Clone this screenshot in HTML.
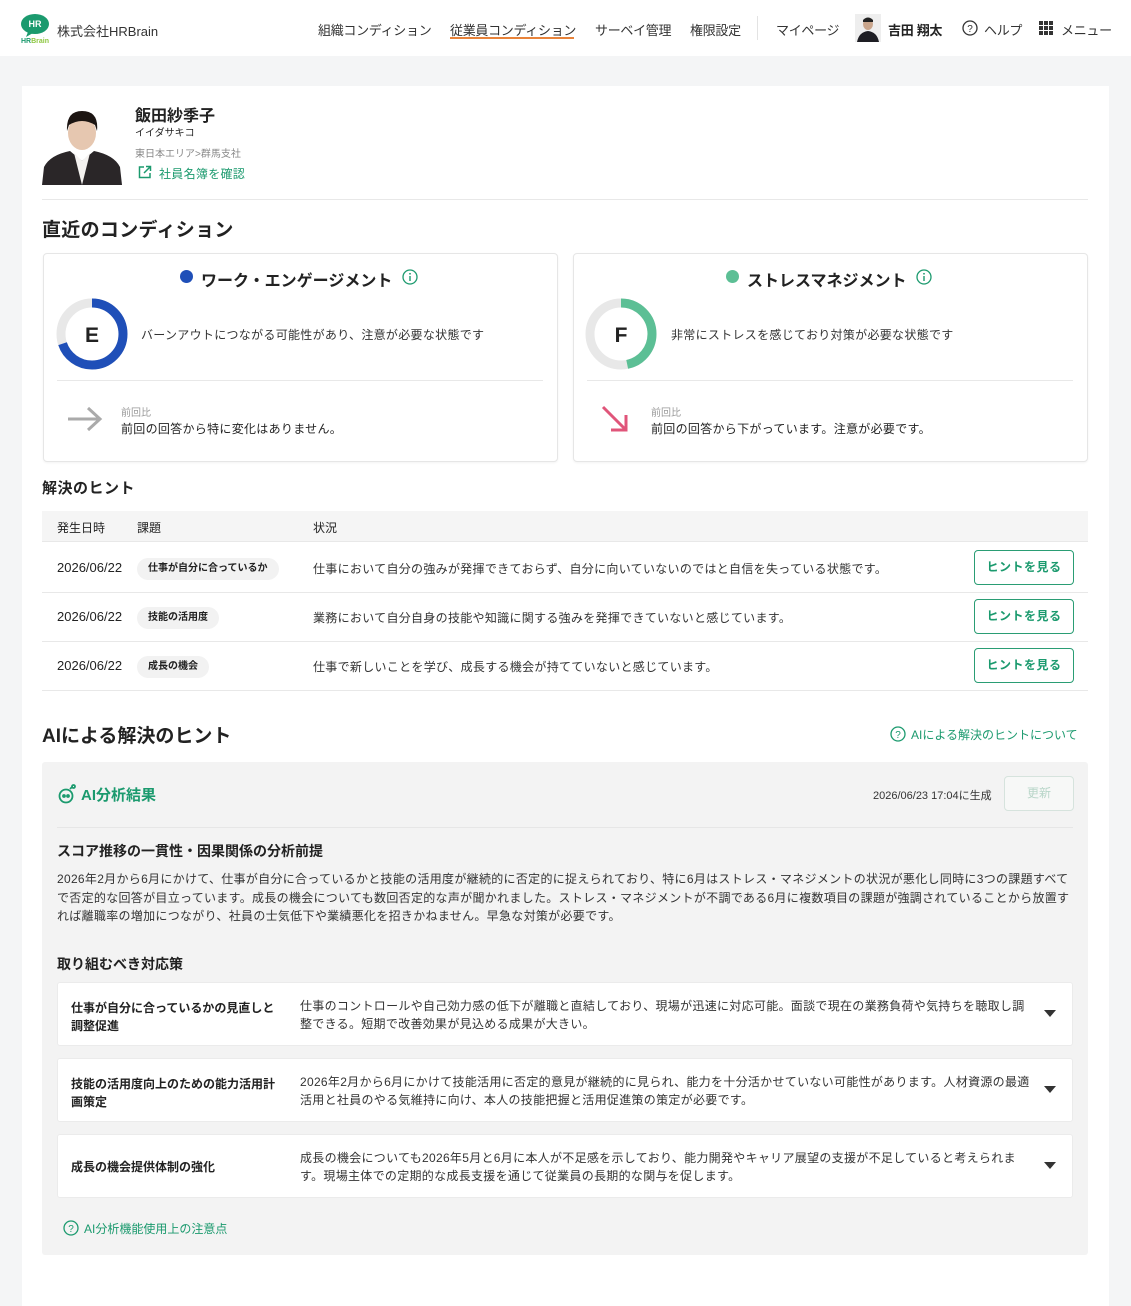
<!DOCTYPE html>
<html><head><meta charset="utf-8"><style>
*{margin:0;padding:0;box-sizing:border-box}
body{width:1131px;height:1280px;background:#f4f5f6;font-family:"Liberation Sans","Noto Sans CJK JP",sans-serif;color:#222;position:relative;overflow:hidden}
.a{position:absolute;white-space:nowrap}
.ls{letter-spacing:0.3px}
.g{color:#1b9a6e}
.hdr{position:absolute;left:0;top:0;width:1131px;height:56px;background:#fff}
.nav{font-size:13px;top:20px;color:#333}
.card{position:absolute;left:22px;top:86px;width:1087px;height:1220px;background:#fff}
.box{position:absolute;background:#fff;border:1px solid #e6e6e6;border-radius:4px;box-shadow:0 1px 2px rgba(0,0,0,.05)}
.hr{position:absolute;height:1px;background:#e8e8e8}
.tag{position:absolute;height:22px;line-height:22px;padding:0 11px;border-radius:11px;background:#f2f2f2;font-size:10px;font-weight:bold;color:#222}
.btn{position:absolute;left:974px;width:100px;height:35px;border:1.5px solid #2a9d74;border-radius:4px;color:#1b9a6e;font-weight:bold;font-size:12px;text-align:center;line-height:32px;background:#fff;letter-spacing:0.5px}
.acc{position:absolute;left:57px;width:1016px;height:64px;background:#fff;border:1px solid #ebebeb;border-radius:3px}
.acc .t{position:absolute;left:13px;font-size:12px;font-weight:bold;line-height:18px;width:212px}
.acc .d{position:absolute;left:242px;font-size:12px;line-height:18px;width:735px;color:#333;letter-spacing:0.3px}
.acc .c{position:absolute;left:986px;top:27px;width:0;height:0;border-left:6px solid transparent;border-right:6px solid transparent;border-top:7px solid #333}
.dt{font-size:13px}
</style></head><body>
<div class="hdr"></div>
<svg class="a" style="left:20px;top:13px" width="30" height="32" viewBox="0 0 30 32"><ellipse cx="15" cy="11" rx="14" ry="10" fill="#1b9a6e"/><path d="M8 19 L6 24 L13 20Z" fill="#1b9a6e"/><text x="15" y="14" font-size="9" font-weight="bold" fill="#fff" text-anchor="middle" font-family="Liberation Sans">HR</text><text x="1" y="30" font-size="7" font-weight="bold" fill="#1b9a6e" font-family="Liberation Sans">HR<tspan fill="#8cc63f">Brain</tspan></text></svg>
<div class="a" style="left:57px;top:21px;font-size:13px;color:#333">株式会社HRBrain</div>
<div class="a nav" style="left:318px;letter-spacing:-0.3px">組織コンディション</div>
<div class="a nav" style="left:450px;letter-spacing:-0.3px">従業員コンディション</div>
<div class="a" style="left:450px;top:37px;width:124px;height:1.5px;background:#e8833a"></div>
<div class="a nav" style="left:595px;letter-spacing:-0.3px">サーベイ管理</div>
<div class="a nav" style="left:690px;letter-spacing:-0.3px">権限設定</div>
<div class="a" style="left:757px;top:16px;width:1px;height:24px;background:#e3e3e3"></div>
<div class="a nav" style="left:776px;letter-spacing:-0.3px">マイページ</div>
<svg class="a" style="left:855px;top:14px" width="26" height="28"><rect width="26" height="28" fill="#eee"/><ellipse cx="13" cy="10" rx="5" ry="6" fill="#c9a58c"/><path d="M8 6 Q13 1 18 6 L18 8 L8 8Z" fill="#222"/><path d="M2 28 Q4 18 13 17 Q22 18 24 28Z" fill="#1e1e24"/></svg>
<div class="a nav" style="left:888px;font-weight:bold;color:#222;letter-spacing:-0.3px">吉田 翔太</div>
<svg class="a" style="left:962px;top:20px" width="16" height="16"><circle cx="8" cy="8" r="7" fill="none" stroke="#333" stroke-width="1.3"/><text x="8" y="12" font-size="10" text-anchor="middle" fill="#333" font-family="Liberation Sans">?</text></svg>
<div class="a nav" style="left:984px;letter-spacing:-0.3px">ヘルプ</div>
<svg class="a" style="left:1039px;top:21px" width="14" height="14" fill="#333"><rect x="0" y="0" width="4" height="4"/><rect x="5" y="0" width="4" height="4"/><rect x="10" y="0" width="4" height="4"/><rect x="0" y="5" width="4" height="4"/><rect x="5" y="5" width="4" height="4"/><rect x="10" y="5" width="4" height="4"/><rect x="0" y="10" width="4" height="4"/><rect x="5" y="10" width="4" height="4"/><rect x="10" y="10" width="4" height="4"/></svg>
<div class="a nav" style="left:1061px;letter-spacing:-0.3px">メニュー</div>

<div class="card"></div>
<svg class="a" style="left:42px;top:103px" width="80" height="82"><rect width="80" height="82" rx="4" fill="#fff"/><ellipse cx="40" cy="30" rx="14" ry="17" fill="#e6c7b0"/><path d="M25 28 Q24 8 40 8 Q57 8 55 28 L53 22 Q40 14 27 22Z" fill="#1c1512"/><path d="M0 82 L2 64 Q8 52 28 48 L40 58 L52 48 Q72 52 78 64 L80 82Z" fill="#2a2628"/><path d="M32 50 L40 82 L48 50 L40 58Z" fill="#f4f2f0"/></svg>
<div class="a" style="left:135px;top:102px;font-size:16px;font-weight:bold">飯田紗季子</div>
<div class="a" style="left:135px;top:124px;font-size:10px">イイダサキコ</div>
<div class="a" style="left:135px;top:145px;font-size:10px;color:#888">東日本エリア&gt;群馬支社</div>
<svg class="a" style="left:138px;top:165px" width="14" height="14" fill="none" stroke="#1b9a6e" stroke-width="1.5"><path d="M6 2H1.5V12.5H12V8"/><path d="M8 1.5H12.5V6M12.5 1.5L6 8"/></svg>
<div class="a g ls" style="left:159px;top:165px;font-size:12px">社員名簿を確認</div>
<div class="hr" style="left:42px;top:199px;width:1046px"></div>
<div class="a" style="left:42px;top:215px;font-size:19px;font-weight:bold;letter-spacing:0.3px">直近のコンディション</div>

<div class="box" style="left:43px;top:253px;width:515px;height:209px"></div>
<div class="a" style="left:180px;top:270px;width:13px;height:13px;border-radius:50%;background:#1f4fb8"></div>
<div class="a" style="left:201px;top:267px;font-size:16px;font-weight:bold">ワーク・エンゲージメント</div>
<svg class="a" style="left:402px;top:269px" width="16" height="16"><circle cx="8" cy="8" r="7" fill="none" stroke="#1b9a6e" stroke-width="1.3"/><rect x="7.3" y="7" width="1.4" height="5" fill="#1b9a6e"/><circle cx="8" cy="4.8" r="0.9" fill="#1b9a6e"/></svg>
<svg class="a" style="left:56px;top:298px" width="72" height="72"><circle cx="36" cy="36" r="31" fill="none" stroke="#e8e8e8" stroke-width="9"/><circle cx="36" cy="36" r="31" fill="none" stroke="#1f4fb8" stroke-width="9" stroke-dasharray="136 200" transform="rotate(-90 36 36)"/><text x="36" y="44" font-size="21" font-weight="bold" text-anchor="middle" fill="#222" font-family="Liberation Sans">E</text></svg>
<div class="a ls" style="left:141px;top:326px;font-size:12px;color:#333">バーンアウトにつながる可能性があり、注意が必要な状態です</div>
<div class="hr" style="left:57px;top:380px;width:486px"></div>
<svg class="a" style="left:66px;top:405px" width="38" height="28" fill="none" stroke="#aaa" stroke-width="3"><path d="M2 14H34M22 3L34 14L22 25"/></svg>
<div class="a" style="left:121px;top:404px;font-size:10px;color:#999">前回比</div>
<div class="a ls" style="left:121px;top:420px;font-size:12px">前回の回答から特に変化はありません。</div>

<div class="box" style="left:573px;top:253px;width:515px;height:209px"></div>
<div class="a" style="left:726px;top:270px;width:13px;height:13px;border-radius:50%;background:#5cbf95"></div>
<div class="a" style="left:747px;top:267px;font-size:16px;font-weight:bold">ストレスマネジメント</div>
<svg class="a" style="left:916px;top:269px" width="16" height="16"><circle cx="8" cy="8" r="7" fill="none" stroke="#1b9a6e" stroke-width="1.3"/><rect x="7.3" y="7" width="1.4" height="5" fill="#1b9a6e"/><circle cx="8" cy="4.8" r="0.9" fill="#1b9a6e"/></svg>
<svg class="a" style="left:585px;top:298px" width="72" height="72"><circle cx="36" cy="36" r="31" fill="none" stroke="#e8e8e8" stroke-width="9"/><circle cx="36" cy="36" r="31" fill="none" stroke="#5cbf95" stroke-width="9" stroke-dasharray="91 200" transform="rotate(-90 36 36)"/><text x="36" y="44" font-size="21" font-weight="bold" text-anchor="middle" fill="#222" font-family="Liberation Sans">F</text></svg>
<div class="a ls" style="left:671px;top:326px;font-size:12px;color:#333">非常にストレスを感じており対策が必要な状態です</div>
<div class="hr" style="left:587px;top:380px;width:486px"></div>
<svg class="a" style="left:600px;top:404px" width="30" height="30" fill="none" stroke="#e0557a" stroke-width="3"><path d="M3 3L26 26M26 11V26H11"/></svg>
<div class="a" style="left:651px;top:404px;font-size:10px;color:#999">前回比</div>
<div class="a ls" style="left:651px;top:420px;font-size:12px">前回の回答から下がっています。注意が必要です。</div>

<div class="a" style="left:42px;top:477px;font-size:15px;font-weight:bold;letter-spacing:0.5px">解決のヒント</div>
<div class="a" style="left:42px;top:511px;width:1046px;height:31px;background:#f5f5f5;border-bottom:1px solid #e8e8e8"></div>
<div class="a" style="left:57px;top:519px;font-size:12px">発生日時</div>
<div class="a" style="left:137px;top:519px;font-size:12px">課題</div>
<div class="a" style="left:313px;top:519px;font-size:12px">状況</div>
<div class="hr" style="left:42px;top:592px;width:1046px"></div>
<div class="hr" style="left:42px;top:641px;width:1046px"></div>
<div class="hr" style="left:42px;top:690px;width:1046px"></div>

<div class="a dt" style="left:57px;top:560px">2026/06/22</div>
<div class="tag" style="left:137px;top:558px">仕事が自分に合っているか</div>
<div class="a ls" style="left:313px;top:560px;font-size:12px;color:#333">仕事において自分の強みが発揮できておらず、自分に向いていないのではと自信を失っている状態です。</div>
<div class="btn" style="top:550px">ヒントを見る</div>
<div class="a dt" style="left:57px;top:609px">2026/06/22</div>
<div class="tag" style="left:137px;top:607px">技能の活用度</div>
<div class="a ls" style="left:313px;top:609px;font-size:12px;color:#333">業務において自分自身の技能や知識に関する強みを発揮できていないと感じています。</div>
<div class="btn" style="top:599px">ヒントを見る</div>
<div class="a dt" style="left:57px;top:658px">2026/06/22</div>
<div class="tag" style="left:137px;top:656px">成長の機会</div>
<div class="a ls" style="left:313px;top:658px;font-size:12px;color:#333">仕事で新しいことを学び、成長する機会が持てていないと感じています。</div>
<div class="btn" style="top:648px">ヒントを見る</div>

<div class="a" style="left:42px;top:721px;font-size:19px;font-weight:bold">AIによる解決のヒント</div>
<svg class="a" style="left:890px;top:726px" width="16" height="16"><circle cx="8" cy="8" r="7" fill="none" stroke="#1b9a6e" stroke-width="1.3"/><text x="8" y="12" font-size="10" text-anchor="middle" fill="#1b9a6e" font-family="Liberation Sans">?</text></svg>
<div class="a g" style="left:911px;top:726px;font-size:12px">AIによる解決のヒントについて</div>

<div class="a" style="left:42px;top:762px;width:1046px;height:493px;background:#f3f3f3;border-radius:3px"></div>
<svg class="a" style="left:57px;top:784px" width="20" height="20" fill="none" stroke="#1b9a6e" stroke-width="1.8"><circle cx="9" cy="12" r="6.5"/><circle cx="7" cy="12" r="1" fill="#1b9a6e"/><circle cx="11" cy="12" r="1" fill="#1b9a6e"/><path d="M13 5L15 3"/><circle cx="16.5" cy="2.5" r="1.5"/></svg>
<div class="a g" style="left:81px;top:784px;font-size:15px;font-weight:bold">AI分析結果</div>
<div class="a" style="left:873px;top:787px;font-size:11px;color:#333">2026/06/23 17:04に生成</div>
<div class="a" style="left:1004px;top:776px;width:70px;height:35px;border:1px solid #d6e3dd;border-radius:4px;background:#f7f8f7;color:#b9d6c9;font-size:12px;text-align:center;line-height:33px">更新</div>
<div class="hr" style="left:57px;top:827px;width:1016px;background:#e6e6e6"></div>
<div class="a" style="left:57px;top:841px;font-size:14px;font-weight:bold">スコア推移の一貫性・因果関係の分析前提</div>
<div class="a" style="left:57px;top:870px;width:1020px;font-size:12px;line-height:18.7px;white-space:normal;color:#333;letter-spacing:0.3px">2026年2月から6月にかけて、仕事が自分に合っているかと技能の活用度が継続的に否定的に捉えられており、特に6月はストレス・マネジメントの状況が悪化し同時に3つの課題すべてで否定的な回答が目立っています。成長の機会についても数回否定的な声が聞かれました。ストレス・マネジメントが不調である6月に複数項目の課題が強調されていることから放置すれば離職率の増加につながり、社員の士気低下や業績悪化を招きかねません。早急な対策が必要です。</div>
<div class="a" style="left:57px;top:954px;font-size:14px;font-weight:bold">取り組むべき対応策</div>

<div class="acc" style="top:982px"><div class="t" style="top:16px;white-space:normal">仕事が自分に合っているかの見直しと調整促進</div><div class="d" style="top:14px;white-space:normal">仕事のコントロールや自己効力感の低下が離職と直結しており、現場が迅速に対応可能。面談で現在の業務負荷や気持ちを聴取し調整できる。短期で改善効果が見込める成果が大きい。</div><div class="c"></div></div>
<div class="acc" style="top:1058px"><div class="t" style="top:16px;white-space:normal">技能の活用度向上のための能力活用計画策定</div><div class="d" style="top:14px;white-space:normal">2026年2月から6月にかけて技能活用に否定的意見が継続的に見られ、能力を十分活かせていない可能性があります。人材資源の最適活用と社員のやる気維持に向け、本人の技能把握と活用促進策の策定が必要です。</div><div class="c"></div></div>
<div class="acc" style="top:1134px"><div class="t" style="top:23px">成長の機会提供体制の強化</div><div class="d" style="top:14px;white-space:normal">成長の機会についても2026年5月と6月に本人が不足感を示しており、能力開発やキャリア展望の支援が不足していると考えられます。現場主体での定期的な成長支援を通じて従業員の長期的な関与を促します。</div><div class="c"></div></div>

<svg class="a" style="left:63px;top:1220px" width="16" height="16"><circle cx="8" cy="8" r="7" fill="none" stroke="#1b9a6e" stroke-width="1.3"/><text x="8" y="12" font-size="10" text-anchor="middle" fill="#1b9a6e" font-family="Liberation Sans">?</text></svg>
<div class="a g" style="left:84px;top:1220px;font-size:12px">AI分析機能使用上の注意点</div>
</body></html>
